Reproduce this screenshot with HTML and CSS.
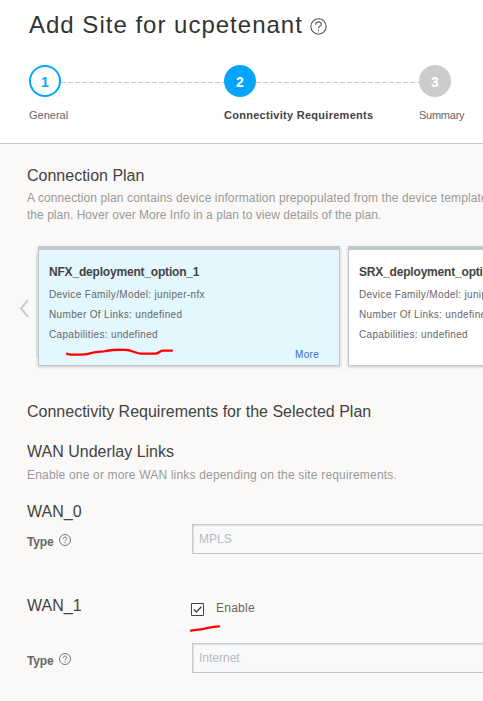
FILE: index.html
```html
<!DOCTYPE html>
<html lang="en">
<head>
<meta charset="utf-8">
<title>Add Site for ucpetenant</title>
<link rel="stylesheet" href="styles.css">
</head>
<body>
<header class="header">
  <div class="title-row">
    <h1 class="title">Add Site for ucpetenant</h1>
    <svg class="help-large" viewBox="0 0 17 17"><circle cx="8.5" cy="8.5" r="7.7"/><path d="M5.7 6.7C5.7 3 11.3 3.1 11.3 6.3C11.3 8.2 8.5 8.2 8.5 10.5M8.5 11.8v1.4"/></svg>
  </div>
  <ol class="steps">
    <li class="step step-done"><div class="track"><span class="dot">1</span></div><span class="step-label label-general">General</span></li>
    <li class="step step-current"><div class="track"><span class="dot">2</span></div><span class="step-label">Connectivity Requirements</span></li>
    <li class="step step-next"><div class="track"><span class="dot">3</span></div><span class="step-label label-summary">Summary</span></li>
  </ol>
</header>
<main class="content">
  <h2 class="heading">Connection Plan</h2>
  <p class="description"><span class="description-lead">A connection plan contains device information prepopulated from the device template</span><br>the plan. Hover over More Info in a plan to view details of the plan.</p>
  <section class="plans">
    <svg class="previous" viewBox="0 0 11 19"><path d="M9 1.2L2 9.5L9 17.8"/></svg>
    <div class="card-list">
      <article class="card card-selected">
        <h3 class="card-title">NFX_deployment_option_1</h3>
        <p class="card-line">Device Family/Model: juniper-nfx</p>
        <p class="card-line">Number Of Links: undefined</p>
        <p class="card-line">Capabilities: undefined</p>
        <a class="more">More</a>
        <svg class="mark mark-card" viewBox="0 0 110 10"><path d="M2 6.7C4 7.9 5 7.6 8 7.6C16 7.8 20 7.9 24 6.6C32 4 36 5.2 41 4C50 2.2 54 2.6 62 3C68 3.5 71 6.7 76 6.7H90C94 6.3 94 4 98 3.7H107"/></svg>
      </article>
      <article class="card">
        <h3 class="card-title">SRX_deployment_option_1</h3>
        <p class="card-line">Device Family/Model: juniper-srx</p>
        <p class="card-line">Number Of Links: undefined</p>
        <p class="card-line">Capabilities: undefined</p>
      </article>
    </div>
  </section>
  <h2 class="heading heading-requirements">Connectivity Requirements for the Selected Plan</h2>
  <h2 class="heading heading-underlay">WAN Underlay Links</h2>
  <p class="description description-links">Enable one or more WAN links depending on the site requirements.</p>
  <h2 class="heading heading-wan">WAN_0</h2>
  <div class="field field-first">
    <label class="field-label"><span>Type</span><svg class="help" viewBox="0 0 12 12"><circle cx="6" cy="6" r="5.5"/><path d="M4.2 4.9C4.2 2.5 7.8 2.6 7.8 4.7C7.8 5.9 6 5.9 6 7.2M6 8.2v1.2"/></svg></label>
    <div class="select">MPLS</div>
  </div>
  <div class="wan-row">
    <h2 class="heading">WAN_1</h2>
    <label class="enable"><svg class="checkbox" viewBox="0 0 13 13"><path class="box" d="M.5 .5h12v12H.5z"/><path class="tick" d="M2.8 6.5L5.3 9L10.4 3.8"/></svg><span>Enable</span><svg class="mark mark-enable" viewBox="0 0 32 8"><path d="M2 6.6C7 5.5 12 5.6 16 4.6C22 3.3 25 2.4 30 2.4"/></svg></label>
  </div>
  <div class="field">
    <label class="field-label"><span>Type</span><svg class="help" viewBox="0 0 12 12"><circle cx="6" cy="6" r="5.5"/><path d="M4.2 4.9C4.2 2.5 7.8 2.6 7.8 4.7C7.8 5.9 6 5.9 6 7.2M6 8.2v1.2"/></svg></label>
    <div class="select">Internet</div>
  </div>
</main>
</body>
</html>
```
FILE: styles.css
```css
* { box-sizing: border-box; }
html { overflow: hidden; }
body { margin: 0; width: 483px; height: 701px; overflow: hidden; background: #faf9f7; color: #434343; font-family: "Liberation Sans", Arial, sans-serif; }
h1, h2, h3, p, ol { margin: 0; padding: 0; font-weight: normal; }
svg { fill: none; flex: none; }

.header { height: 144px; padding: 10px 0 0 29px; background: #fff; border-bottom: 1px solid #c8c8c8; }
.title-row { display: flex; align-items: flex-start; height: 55px; }
.title { font-size: 24px; line-height: 30px; letter-spacing: 1px; color: #333; white-space: nowrap; }
.help-large { width: 17px; height: 17px; margin: 8px 0 0 7px; stroke: #555; stroke-width: 1.1; }
.steps { display: flex; list-style: none; }
.step { flex: 0 0 195px; }
.step-next { flex-basis: 64px; }
.track { display: flex; align-items: center; height: 32px; }
.step:not(.step-next) .track::after { content: ""; flex: 1; height: 1px; margin-top: 2px; background: repeating-linear-gradient(90deg, #c8c8c8 0 5px, transparent 5px 7px); }
.dot { width: 32px; height: 32px; border-radius: 50%; display: flex; align-items: center; justify-content: center; padding-top: 2px; font-size: 14px; font-weight: bold; color: #fff; background: #05a4ff; }
.step-done .dot { background: #fff; border: 2px solid #05a4ff; color: #05a4ff; }
.step-next .dot { background: #ccc; }
.step-label { display: block; margin-top: 11px; font-size: 11px; line-height: 14px; color: #666; white-space: nowrap; }
.label-summary { letter-spacing: -.25px; }
.step-current .step-label { font-weight: bold; color: #434343; letter-spacing: .28px; }

.content { padding: 21px 0 0 27px; }
.heading { font-size: 16px; line-height: 22px; color: #434343; white-space: nowrap; }
.description { margin-top: 3px; font-size: 12px; line-height: 17px; letter-spacing: .03px; color: #999; white-space: nowrap; }
.description-lead { letter-spacing: .11px; }
.plans { display: flex; margin: 22px 0 0 -8px; height: 120px; }
.previous { width: 11px; height: 19px; margin: 53px 8px 0 0; stroke: #ccc; stroke-width: 2; }
.card-list { display: flex; gap: 8px; }
.card { position: relative; flex: 0 0 302px; height: 120px; padding: 15px 10px 0; background: #fff; border: 1px solid #c2c9cc; border-top: 4px solid #bfc9cc; box-shadow: 0 1px 3px rgba(0,0,0,.2); white-space: nowrap; }
.card-selected { background: #e3f7ff; }
.card-selected::before { content: ""; position: absolute; left: -3px; top: 3px; width: 2px; height: 105px; background: #dcdcdb; }
.card-title { font-size: 12px; line-height: 14px; margin-bottom: 6px; font-weight: bold; letter-spacing: -.19px; color: #434343; }
.card-line { font-size: 10px; line-height: 20px; letter-spacing: .34px; color: #666; }
.more { position: absolute; right: 20px; bottom: 3px; font-size: 10px; line-height: 14px; color: #3569c9; letter-spacing: .3px; }
.mark { position: absolute; stroke: #f00; stroke-width: 2.3; stroke-linecap: round; }
.mark-card { left: 26px; top: 97px; width: 110px; height: 10px; }
.heading-requirements { margin-top: 35px; }
.heading-underlay { margin-top: 18px; }
.description-links { margin-top: 4px; letter-spacing: .18px; }
.heading-wan { margin-top: 17px; }
.field { display: flex; height: 30px; margin-top: 2px; }
.field-first { margin-top: 1px; }
.field-label { display: flex; align-items: flex-start; width: 165px; padding-top: 10px; font-size: 12px; line-height: 16px; font-weight: bold; letter-spacing: -.15px; color: #666; }
.help { width: 12px; height: 12px; margin-left: 5px; stroke: #777; stroke-width: 1; }
.select { flex: 1; height: 30px; padding: 0 6px; border: 1px solid #c8c8c8; border-right: 0; background: #f8f9fb; box-shadow: inset 1px 1px 2px rgba(0,0,0,.1); font-size: 12px; line-height: 28px; color: #bbb; }
.wan-row { display: flex; height: 46px; margin-top: 41px; }
.wan-row .heading { width: 164px; }
.enable { position: relative; display: flex; align-items: flex-start; font-size: 12px; line-height: 16px; letter-spacing: .25px; color: #666; padding-top: 5px; }
.checkbox { width: 13px; height: 13px; margin: 3px 12px 0 0; stroke: #444; }
.box { fill: #fff; }
.tick { stroke-width: 1.4; }
.mark-enable { left: -2px; top: 29px; width: 32px; height: 8px; }
```
